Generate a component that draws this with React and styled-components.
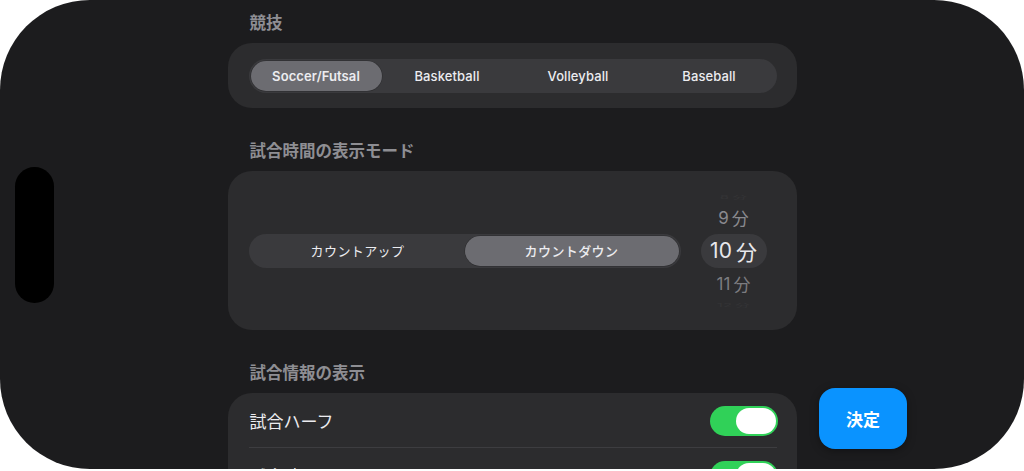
import React from "react";
import styled, { createGlobalStyle } from "styled-components";

const Global = createGlobalStyle`
  html, body { margin: 0; padding: 0; background: #ffffff; }
  body { font-family: Inter, "Noto Sans CJK JP", sans-serif; -webkit-font-smoothing: antialiased; }
  * { box-sizing: border-box; }
`;

const Screen = styled.div`
  position: relative;
  width: 1024px;
  height: 469px;
  background: #1c1c1e;
  border-radius: 90px;
  overflow: hidden;
`;

const Island = styled.div`
  position: absolute;
  left: 15px;
  top: 167px;
  width: 39px;
  height: 136px;
  border-radius: 20px;
  background: #000;
`;

const Column = styled.div`
  width: 569px;
  margin: 0 auto;
  padding-top: 12px;
  display: flex;
  flex-direction: column;
`;

const Heading = styled.div`
  height: 20px;
  line-height: 20px;
  padding-left: 22px;
  margin-top: ${(p) => (p.$first ? 0 : 32)}px;
  margin-bottom: 11px;
  font-family: "Noto Sans CJK JP", sans-serif;
  font-size: 16.5px;
  font-weight: 700;
  color: #8e8e93;
`;

const Card = styled.div`
  background: #2c2c2e;
  border-radius: 24px;
  padding: ${(p) => p.$pad || "0"};
  height: ${(p) => (p.$h ? p.$h + "px" : "auto")};
  display: flex;
  flex-direction: ${(p) => (p.$col ? "column" : "row")};
  align-items: ${(p) => (p.$col ? "stretch" : "center")};
  gap: ${(p) => p.$gap || 0}px;
`;

const SegTrack = styled.div`
  flex: 1;
  display: grid;
  grid-template-columns: repeat(${(p) => p.$n}, 1fr);
  height: 34px;
  padding: 2px;
  border-radius: 17px;
  background: #3a3a3d;
`;

const SegItem = styled.div`
  display: flex;
  align-items: center;
  justify-content: center;
  border-radius: 15px;
  background: ${(p) => (p.$on ? "#6c6c71" : "transparent")};
  box-shadow: ${(p) => (p.$on ? "0 0 0 0.5px rgba(0,0,0,0.25)" : "none")};
  color: #ececf0;
  font-family: ${(p) => (p.$jp ? '"Noto Sans CJK JP", sans-serif' : 'Inter, "Noto Sans CJK JP", sans-serif')};
  font-size: 13px;
  font-weight: ${(p) => (p.$jp ? (p.$on ? 500 : 400) : p.$on ? 600 : 500)};
  letter-spacing: ${(p) => (p.$jp ? "0.4px" : "0.1px")};
`;

const Picker = styled.div`
  width: 66px;
  height: 118px;
  overflow: hidden;
  display: flex;
  flex-direction: column;
  align-items: stretch;
  justify-content: center;
`;

const PickRow = styled.div`
  flex: none;
  height: ${(p) => p.$h}px;
  display: flex;
  align-items: center;
  justify-content: center;
  gap: ${(p) => (p.$size > 18 ? 4 : 3)}px;
  border-radius: 17px;
  background: ${(p) => (p.$on ? "#3a3a3d" : "transparent")};
  color: ${(p) => (p.$on ? "#e8e8ec" : "#8a8a8f")};
  opacity: ${(p) => p.$op ?? 1};
  font-family: Inter, "Noto Sans CJK JP", sans-serif;
  font-size: ${(p) => p.$size}px;
  font-weight: 400;
  transform: ${(p) => (p.$squash ? `scaleY(${p.$squash})` : "none")};
`;

const Unit = styled.span`
  font-family: "Noto Sans CJK JP", sans-serif;
`;

const Row = styled.div`
  height: 55px;
  display: flex;
  align-items: center;
  justify-content: space-between;
  padding: 0 19px 0 22px;
  position: relative;
  &::after {
    content: "";
    display: ${(p) => (p.$last ? "none" : "block")};
    position: absolute;
    left: 21px;
    right: 20px;
    bottom: 0;
    height: 1px;
    background: #3d3d40;
  }
`;

const RowLabel = styled.span`
  font-family: "Noto Sans CJK JP", sans-serif;
  font-size: 17px;
  color: #ececf0;
`;

const Toggle = styled.div`
  width: 68px;
  height: 30px;
  border-radius: 15px;
  background: #30d158;
  padding: 2px;
  display: flex;
  justify-content: ${(p) => (p.$on ? "flex-end" : "flex-start")};
`;

const Knob = styled.div`
  width: 40px;
  height: 26px;
  border-radius: 13px;
  background: #ffffff;
`;

const ConfirmButton = styled.button`
  position: absolute;
  left: 819px;
  top: 388px;
  width: 88px;
  height: 61px;
  border: none;
  border-radius: 16px;
  background: #0a93ff;
  color: #ffffff;
  font-family: "Noto Sans CJK JP", sans-serif;
  font-size: 17px;
  font-weight: 700;
  box-shadow: 0 2px 8px rgba(0, 0, 0, 0.35);
  cursor: pointer;
`;

const sports = ["Soccer/Futsal", "Basketball", "Volleyball", "Baseball"];

export default function App() {
  return (
    <>
      <Global />
      <Screen>
        <Island />
        <Column>
          <Heading $first>競技</Heading>
          <Card $pad="16px 20px 15px 21px">
            <SegTrack $n={4}>
              {sports.map((s, i) => (
                <SegItem key={s} $on={i === 0}>
                  {s}
                </SegItem>
              ))}
            </SegTrack>
          </Card>

          <Heading>試合時間の表示モード</Heading>
          <Card $h={159} $pad="0 30px 0 21px" $gap={20}>
            <SegTrack $n={2}>
              <SegItem $jp>カウントアップ</SegItem>
              <SegItem $jp $on>
                カウントダウン
              </SegItem>
            </SegTrack>
            <Picker>
              <PickRow $h={10} $size={15} $op={0.08} $squash={0.3}>
                8<Unit>分</Unit>
              </PickRow>
              <PickRow $h={32} $size={17}>
                9<Unit>分</Unit>
              </PickRow>
              <PickRow $h={34} $size={21} $on>
                10<Unit>分</Unit>
              </PickRow>
              <PickRow $h={32} $size={17} $op={0.85}>
                11<Unit>分</Unit>
              </PickRow>
              <PickRow $h={10} $size={15} $op={0.08} $squash={0.3}>
                12<Unit>分</Unit>
              </PickRow>
            </Picker>
          </Card>

          <Heading>試合情報の表示</Heading>
          <Card $col>
            <Row>
              <RowLabel>試合ハーフ</RowLabel>
              <Toggle $on>
                <Knob />
              </Toggle>
            </Row>
            <Row $last>
              <RowLabel>試合時間</RowLabel>
              <Toggle $on>
                <Knob />
              </Toggle>
            </Row>
          </Card>
        </Column>
        <ConfirmButton>決定</ConfirmButton>
      </Screen>
    </>
  );
}
